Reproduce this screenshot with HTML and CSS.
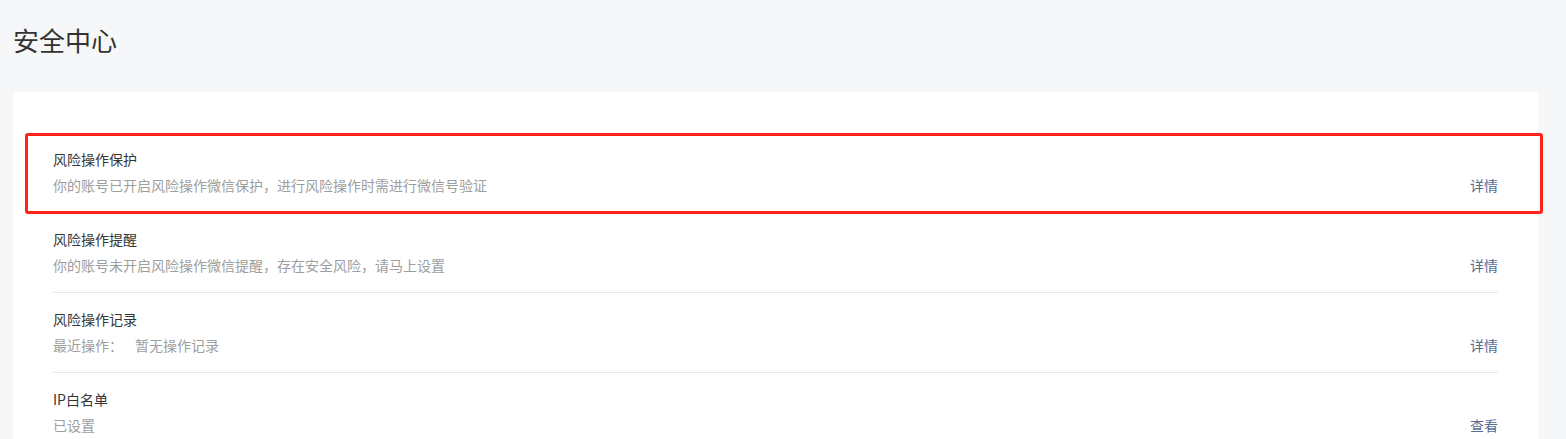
FILE: index.html
```html
<!DOCTYPE html>
<html lang="zh-CN">
<head>
<meta charset="utf-8">
<title>安全中心</title>
<link rel="stylesheet" href="styles.css">
</head>
<body>
<div class="page">
  <h1 class="page-title">安全中心</h1>
  <div class="card">
    <div class="row row-highlight">
      <div class="row-main">
        <div class="row-title">风险操作保护</div>
        <div class="row-desc">你的账号已开启风险操作微信保护，进行风险操作时需进行微信号验证</div>
      </div>
      <a class="row-link">详情</a>
    </div>
    <div class="row">
      <div class="row-main">
        <div class="row-title">风险操作提醒</div>
        <div class="row-desc">你的账号未开启风险操作微信提醒，存在安全风险，请马上设置</div>
      </div>
      <a class="row-link">详情</a>
    </div>
    <div class="row">
      <div class="row-main">
        <div class="row-title">风险操作记录</div>
        <div class="row-desc"><span class="label">最近操作：</span><span class="value">暂无操作记录</span></div>
      </div>
      <a class="row-link">详情</a>
    </div>
    <div class="row row-last">
      <div class="row-main">
        <div class="row-title">IP白名单</div>
        <div class="row-desc">已设置</div>
      </div>
      <a class="row-link">查看</a>
    </div>
  </div>
</div>
</body>
</html>
```

FILE: styles.css
```css
html, body {
  margin: 0;
  padding: 0;
  overflow: hidden;
  background: #f6f7f9;
}
body {
  font-family: "Noto Sans CJK SC", "Noto Sans", sans-serif;
  color: #353535;
}
.page {
  padding: 22px 28px 0 13px;
}
.page-title {
  margin: 0;
  font-size: 26px;
  line-height: 36px;
  font-weight: 400;
  color: #333333;
}
.card {
  margin-top: 34px;
  background: #ffffff;
  border-radius: 4px;
  padding: 41px 40px 40px 40px;
}
.row {
  position: relative;
  display: flex;
  align-items: flex-end;
  justify-content: space-between;
  padding: 15px 0 16px;
  border-bottom: 1px solid #e7e7e7;
}
.row-last {
  border-bottom: none;
}
.row-main {
  display: flex;
  flex-direction: column;
  gap: 4px;
}
.row-title {
  font-size: 14px;
  line-height: 22px;
  color: #353535;
}
.row-desc {
  font-size: 14px;
  line-height: 22px;
  color: #9e9e9e;
}
.label {
  margin-right: 12px;
}
.row-link {
  font-size: 14px;
  line-height: 22px;
  color: #576b95;
  cursor: pointer;
}
.row-highlight::after {
  content: "";
  position: absolute;
  left: -28px;
  right: -45px;
  top: 0;
  bottom: -2px;
  border: 3px solid #ff2418;
  border-radius: 3px;
  pointer-events: none;
}
```
